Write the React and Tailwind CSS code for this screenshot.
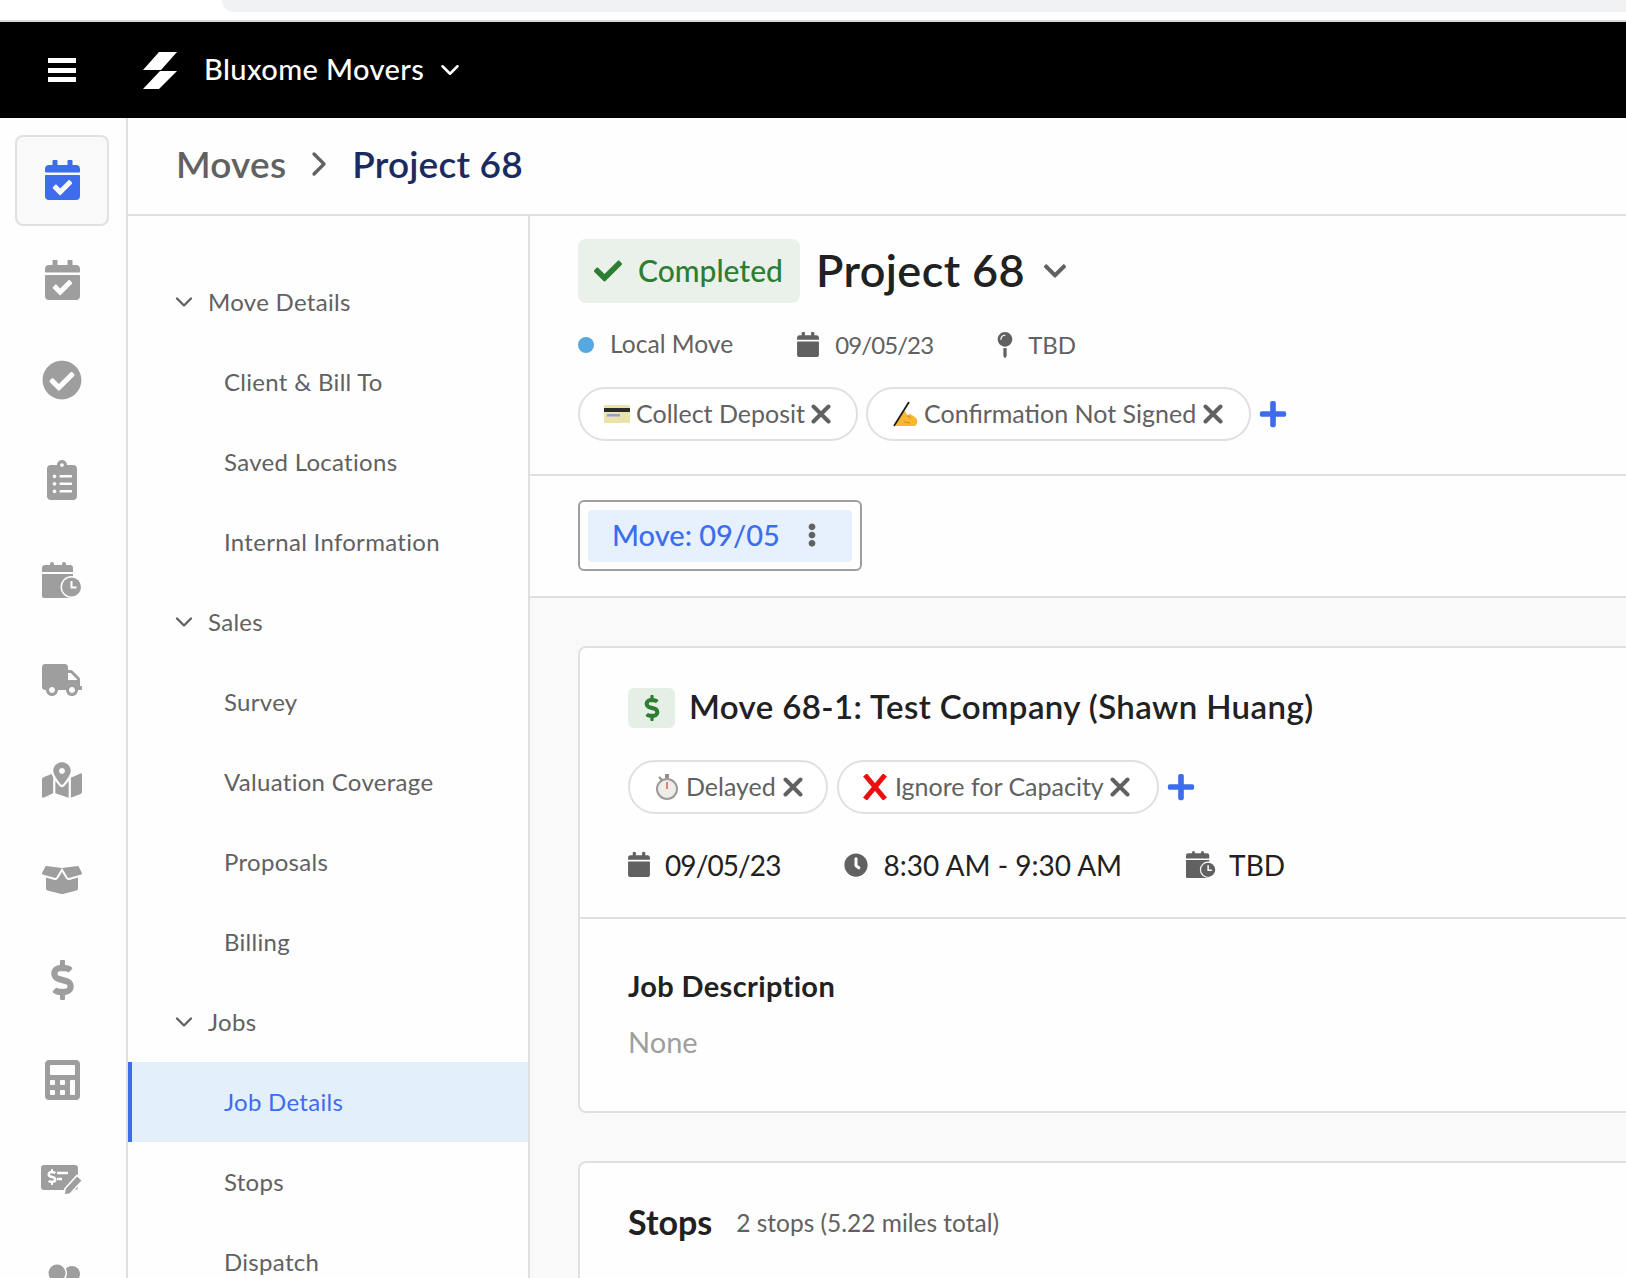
import { FaBoxOpen, FaCalculator, FaCalendar, FaCalendarCheck, FaCheck, FaCheckCircle, FaChevronDown, FaClipboardList, FaClock, FaDollarSign, FaEllipsisV, FaMapMarkedAlt, FaMapPin, FaPlus, FaTruck } from 'react-icons/fa';
import { LuChevronDown, LuChevronRight } from 'react-icons/lu';

const CalendarClock = ({ className }) => (
    <svg viewBox="0 0 40 36" fill="currentColor" className={className}>
        <rect x="8" y="0" width="4" height="6" rx="2" />
        <rect x="20" y="0" width="4" height="6" rx="2" />
        <path d="M0 10V6a3 3 0 0 1 3-3h25a3 3 0 0 1 3 3v4z" />
        <path d="M0 12h31v24H2a2 2 0 0 1-2-2z" />
        <circle cx="29.5" cy="25" r="11" fill="#fff" />
        <circle cx="29.5" cy="25" r="9.5" />
        <path d="M29.5 19v6.5h5" fill="none" stroke="#fff" strokeWidth="2" />
    </svg>
);

const MoneyCheckPen = ({ className }) => (
    <svg viewBox="0 0 42 30" fill="currentColor" className={className}>
        <rect x="0" y="0" width="37" height="25" rx="3" />
        <FaDollarSign x="3" y="4" width="11" height="17" color="#fff" />
        <path d="M16 8h11M16 14h5" stroke="#fff" strokeWidth="2.5" />
        <path d="M23 30l1-6.5L36 10.5l5.5 5L29 29z" stroke="#fff" strokeWidth="1.6" />
    </svg>
);

// Only the heads show above the fold
const TwoHeads = ({ className }) => (
    <svg viewBox="0 0 40 32" fill="currentColor" className={className}>
        <circle cx="30" cy="10" r="8" />
        <circle cx="15" cy="9" r="10" fill="#fff" />
        <circle cx="15" cy="9" r="8.5" />
    </svg>
);

const CardEmoji = () => (
    <svg viewBox="0 0 26 18" className="h-[18px] w-[26px] shrink-0">
        <rect x="0" y="0" width="26" height="18" rx="1" fill="#ece2ac" />
        <rect x="0" y="3" width="26" height="4" fill="#2b2b2b" />
        <rect x="3" y="9" width="13" height="2.5" fill="#8fa3c9" />
    </svg>
);

const WritingEmoji = () => (
    <svg viewBox="0 0 26 26" className="h-[26px] w-[26px] shrink-0">
        <path d="M4 25c-1-2-1-4 1-6l4-4 2-4c1-1 3-1 3 1l1 2 3-1 5 3c3 2 3 7 0 9z" fill="#f7b733" />
        <path d="M12 21l6 1M15 15l4 2" stroke="#d98a1e" strokeWidth="1" />
        <path d="M2 25L17 1" stroke="#1b1b1b" strokeWidth="1.8" />
    </svg>
);

const TimerEmoji = () => (
    <svg viewBox="0 0 22 26" className="h-[26px] w-[22px] shrink-0">
        <rect x="9" y="0" width="4" height="4" fill="#8d8d8d" />
        <circle cx="11" cy="15" r="10" fill="#efedea" stroke="#9a9a9a" strokeWidth="2" />
        <path d="M11 15V8" stroke="#d3583c" strokeWidth="1.4" />
        <path d="M3 3l3 3" stroke="#8d8d8d" strokeWidth="2" />
    </svg>
);

const RedX = () => (
    <svg viewBox="0 0 24 26" className="h-[26px] w-6 shrink-0">
        <path d="M2 1l20 24M22 1L2 25" stroke="#ee0d0d" strokeWidth="5" />
    </svg>
);

const CloseX = () => (
    <svg viewBox="0 0 20 20" className="h-5 w-5 shrink-0">
        <path d="M2.5 2.5l15 15M17.5 2.5l-15 15" stroke="#616161" strokeWidth="4" strokeLinecap="round" />
    </svg>
);

const Chip = ({ icon, label, className, labelClass = 'mx-[6px]' }) => (
    <div className={`flex h-[54px] items-center rounded-full border-2 border-[#e0e0e0] bg-white text-[25px] text-[#616161] ${className}`}>
        {icon}
        <span className={labelClass}>{label}</span>
        <CloseX />
    </div>
);

const railIcons = [
    <FaCalendarCheck className="h-10 w-[35px]" />,
    <FaCheckCircle className="h-10 w-10" />,
    <FaClipboardList className="h-10 w-[30px]" />,
    <CalendarClock className="h-9 w-10" />,
    <FaTruck className="h-8 w-10" />,
    <FaMapMarkedAlt className="h-9 w-10" />,
    <FaBoxOpen className="h-8 w-10" />,
    <FaDollarSign className="h-10 w-[23px]" />,
    <FaCalculator className="h-10 w-[35px]" />,
    <MoneyCheckPen className="h-[30px] w-[42px]" />,
    <TwoHeads className="h-8 w-10" />,
];

const menu = [
    { label: 'Move Details', head: true },
    { label: 'Client & Bill To' },
    { label: 'Saved Locations' },
    { label: 'Internal Information' },
    { label: 'Sales', head: true },
    { label: 'Survey' },
    { label: 'Valuation Coverage' },
    { label: 'Proposals' },
    { label: 'Billing' },
    { label: 'Jobs', head: true },
    { label: 'Job Details', active: true },
    { label: 'Stops' },
    { label: 'Dispatch' },
];

export default function App() {
    return (
        <div className="flex h-[1278px] w-[1626px] flex-col overflow-hidden bg-[#fefefe] font-[Lato,sans-serif]">
            {/* Browser strip */}
            <div className="h-[22px] shrink-0 border-b-2 border-[#d9d9d9] bg-white">
                <div className="ml-[222px] h-3 rounded-bl-[22px] bg-[#f1f2f4]" />
            </div>

            {/* Top bar */}
            <div className="flex h-24 shrink-0 items-center bg-black text-white">
                <div className="ml-12 flex h-6 w-7 flex-col justify-between">
                    <div className="h-[5px] bg-white" />
                    <div className="h-[5px] bg-white" />
                    <div className="h-[5px] bg-white" />
                </div>
                <svg viewBox="0 0 34 37" fill="#fff" className="ml-[67px] h-[37px] w-[34px]">
                    <path d="M16 0h18L18 18H0zM17 19h17L16 37H0z" />
                </svg>
                <span className="ml-[27px] pb-[2px] text-[29px] font-medium tracking-[0.4px]">Bluxome Movers</span>
                <LuChevronDown className="ml-[11px] h-[30px] w-[30px]" />
            </div>

            <div className="flex min-h-0 flex-1">
                {/* Icon rail */}
                <div className="w-[128px] shrink-0 border-r-2 border-[#e0e0e0] pr-[2px] pt-[12px]">
                    <div className="flex h-[100px] items-center justify-center">
                        <div className="flex h-[91px] w-[94px] items-center justify-center rounded-lg border-2 border-[#e0e0e0] bg-[#f9f9f9] text-[#3d6ded]">
                            <FaCalendarCheck className="h-10 w-[35px]" />
                        </div>
                    </div>
                    {railIcons.map((icon, i) => (
                        <div key={i} className="flex h-[100px] items-center justify-center text-[#9e9e9e]">
                            {icon}
                        </div>
                    ))}
                </div>

                <div className="flex min-w-0 flex-1 flex-col">
                    {/* Breadcrumb */}
                    <div className="flex h-[98px] shrink-0 items-center border-b-2 border-[#e0e0e0] pb-1 pl-[48px] text-[37px] font-semibold tracking-[0.2px]">
                        <span className="text-[#616161]">Moves</span>
                        <LuChevronRight className="mx-[13px] h-[40px] w-[40px] text-[#616161]" />
                        <span className="text-[#1a2b5f]">Project 68</span>
                    </div>

                    <div className="flex min-h-0 flex-1">
                        {/* Section menu */}
                        <div className="w-[402px] shrink-0 border-r-2 border-[#e0e0e0] pt-[46px] text-[24px] tracking-[0.3px] text-[#616161]">
                            {menu.map((item) => (
                                <div
                                    key={item.label}
                                    className={`flex h-20 items-center ${item.active ? 'border-l-4 border-[#3d6ded] bg-[#e4effc] pl-[92px] text-[#3d6ded]' : item.head ? 'pl-[42px]' : 'pl-[96px]'}`}
                                >
                                    {item.head && <LuChevronDown className="mr-[10px] h-7 w-7" />}
                                    {item.label}
                                </div>
                            ))}
                        </div>

                        {/* Main */}
                        <div className="min-w-0 flex-1 bg-[#f9f9f9]">
                            <div className="h-[260px] border-b-2 border-[#e0e0e0] bg-[#fefefe] pl-12 pt-[21px]">
                                <div className="flex items-center">
                                    <div className="flex h-16 w-[222px] items-center rounded-lg bg-[#e9f1ea] pl-4 text-[30px] font-medium text-[#2e7d32]">
                                        <FaCheck className="mr-4 h-7 w-7" />
                                        Completed
                                    </div>
                                    <span className="ml-4 text-[45px] font-semibold tracking-[0.4px] text-[#212121]">Project 68</span>
                                    <FaChevronDown className="ml-[17px] h-[26px] w-[26px] text-[#616161]" />
                                </div>
                                <div className="mt-[23px] flex h-[34px] items-center text-[24.6px] text-[#616161]">
                                    <div className="h-4 w-4 rounded-full bg-[#56a9de]" />
                                    <span className="ml-[16px]">Local Move</span>
                                    <FaCalendar className="ml-[64px] h-[25px] w-[22px]" />
                                    <span className="ml-4 text-[24px] tracking-[-0.9px]">09/05/23</span>
                                    <FaMapPin className="ml-[64px] h-[26px] w-4" />
                                    <span className="ml-[15px] text-[24px]">TBD</span>
                                </div>
                                <div className="mt-[25px] flex items-center">
                                    <Chip icon={<CardEmoji />} label="Collect Deposit" className="w-[280px] pl-6" />
                                    <Chip icon={<WritingEmoji />} label="Confirmation Not Signed" labelClass="ml-[6px] mr-[7px]" className="ml-2 w-[385px] pl-6" />
                                    <FaPlus className="ml-[7px] h-[30px] w-[30px] text-[#3d6ded]" />
                                </div>
                            </div>

                            <div className="h-[122px] border-b-2 border-[#e0e0e0] bg-[#fefefe] pl-12 pt-[24px]">
                                <div className="flex h-[71px] w-[284px] items-center justify-center rounded-md border-2 border-[#9e9e9e]">
                                    <div className="flex h-[52px] w-[264px] items-center rounded bg-[#e6f1fd] pb-[2px] pl-6 text-[29px] font-medium text-[#3d6ded]">
                                        Move: 09/05
                                        <FaEllipsisV className="ml-[20px] h-[24px] w-[24px] text-[#616161]" />
                                    </div>
                                </div>
                            </div>

                            {/* Cards */}
                            <div className="w-[1400px] pl-12 pt-[48px]">
                                <div className="h-[467px] rounded-lg border-2 border-[#e0e0e0] bg-[#fefefe]">
                                    <div className="h-[271px] border-b-2 border-[#e0e0e0] pl-[48px] pt-[34px]">
                                        <div className="flex items-center">
                                            <div className="flex h-10 w-[47px] items-center justify-center rounded-md bg-[#e4efe6] text-[#2e7d32]">
                                                <FaDollarSign className="h-[26px] w-4" />
                                            </div>
                                            <span className="ml-[14px] pb-[3px] text-[33px] font-semibold tracking-[0.4px] text-[#212121]">Move 68-1: Test Company (Shawn Huang)</span>
                                        </div>
                                        <div className="mt-[25px] flex items-center">
                                            <Chip icon={<TimerEmoji />} label="Delayed" labelClass="ml-[8px] mr-[7px]" className="w-[200px] pl-[26px]" />
                                            <Chip icon={<RedX />} label="Ignore for Capacity" labelClass="ml-[8px] mr-[6px]" className="ml-[9px] w-[322px] pl-6" />
                                            <FaPlus className="ml-[7px] h-[30px] w-[30px] text-[#3d6ded]" />
                                        </div>
                                        <div className="mt-[33px] flex h-9 items-center text-[28px] text-[#212121]">
                                            <FaCalendar className="h-[25px] w-[22px] text-[#616161]" />
                                            <span className="ml-[15px] tracking-[-0.9px]">09/05/23</span>
                                            <FaClock className="ml-[63px] h-6 w-6 text-[#616161]" />
                                            <span className="ml-4">8:30 AM - 9:30 AM</span>
                                            <CalendarClock className="ml-16 h-[27px] w-[30px] text-[#616161]" />
                                            <span className="ml-[13px]">TBD</span>
                                        </div>
                                    </div>
                                    <div className="pl-[48px] pt-[45px]">
                                        <div className="text-[29px] font-bold tracking-[0.35px] text-[#212121]">Job Description</div>
                                        <div className="mt-[12px] text-[29px] text-[#9e9e9e]">None</div>
                                    </div>
                                </div>

                                <div className="mt-[48px] h-[300px] rounded-lg border-2 border-[#e0e0e0] bg-[#fefefe] pl-[48px] pt-[33px]">
                                    <div className="flex items-center">
                                        <span className="text-[34px] font-bold text-[#212121]">Stops</span>
                                        <span className="ml-6 pt-[4px] text-[24.5px] text-[#616161]">2 stops (5.22 miles total)</span>
                                    </div>
                                </div>
                            </div>
                        </div>
                    </div>
                </div>
            </div>
        </div>
    );
}
